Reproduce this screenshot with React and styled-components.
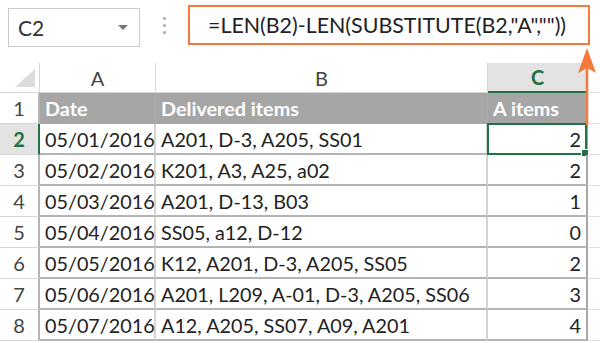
import React from "react";
import styled, { createGlobalStyle } from "styled-components";

const GlobalStyle = createGlobalStyle`
  html, body {
    margin: 0;
    padding: 0;
    background: #ffffff;
  }
  body {
    font-family: Lato, "Open Sans", "Liberation Sans", sans-serif;
    color: #222222;
  }
`;

const green = "#217346";
const orange = "#f37a3a";

const Page = styled.div`
  position: relative;
  width: 600px;
  height: 343px;
  overflow: hidden;
  background: #ffffff;
`;

const FormulaBar = styled.div`
  display: flex;
  align-items: flex-start;
  height: 63px;
  padding: 5px 10px 0 8px;
  box-sizing: border-box;
`;

const NameBox = styled.div`
  width: 132px;
  height: 39px;
  margin-top: 3px;
  box-sizing: border-box;
  border: 1px solid #c9c9c9;
  display: flex;
  align-items: center;
  justify-content: space-between;
  padding: 0 11px 0 9px;
  font-size: 21px;
  color: #333333;
`;

const Caret = styled.span`
  width: 0;
  height: 0;
  border-left: 5px solid transparent;
  border-right: 5px solid transparent;
  border-top: 5px solid #777777;
`;

const Dots = styled.div`
  width: 48px;
  height: 40px;
  display: flex;
  flex-direction: column;
  align-items: center;
  justify-content: center;
  gap: 4px;
`;

const Dot = styled.span`
  width: 3px;
  height: 3px;
  border-radius: 50%;
  background: #a8a8a8;
`;

const FormulaInput = styled.div`
  flex: 1;
  height: 40px;
  box-sizing: border-box;
  border: 2px solid ${orange};
  display: flex;
  align-items: center;
  padding-left: 18px;
  font-size: 21.4px;
  color: #222222;
  white-space: nowrap;
`;

const Sheet = styled.div`
  display: grid;
  grid-template-columns: 40px 116px 332px 100px 12px;
  grid-template-rows: 30px repeat(8, 31px);
`;

const Corner = styled.div`
  border-right: 1px solid #d6d6d6;
  border-bottom: 1px solid #d6d6d6;
  display: flex;
  align-items: flex-end;
  justify-content: flex-end;
  padding: 0 4px 5px 0;
`;

const ColHead = styled.div`
  display: flex;
  align-items: center;
  justify-content: center;
  font-size: 20px;
  color: ${(p) => (p.$active ? green : "#444444")};
  font-weight: ${(p) => (p.$active ? 700 : 400)};
  background: ${(p) => (p.$active ? "#e3e3e3" : "#ffffff")};
  border-right: 1px solid #d6d6d6;
  border-bottom: ${(p) => (p.$active ? `2px solid ${green}` : "1px solid #d6d6d6")};
  box-sizing: border-box;
`;

const RowHead = styled.div`
  display: flex;
  align-items: center;
  justify-content: center;
  font-size: 20px;
  color: ${(p) => (p.$active ? green : "#444444")};
  font-weight: ${(p) => (p.$active ? 700 : 400)};
  background: ${(p) => (p.$active ? "#e3e3e3" : "#ffffff")};
  border-right: ${(p) => (p.$active ? `2px solid ${green}` : "2px solid #b4b4b4")};
  border-bottom: 1px solid #d6d6d6;
  box-sizing: border-box;
`;

const Cell = styled.div`
  position: relative;
  display: flex;
  align-items: center;
  justify-content: ${(p) => (p.$num ? "flex-end" : "flex-start")};
  padding: ${(p) => (p.$num ? "0 5px 0 0" : "0 0 0 5px")};
  font-size: 19.8px;
  white-space: nowrap;
  box-sizing: border-box;
  color: #222222;
  border-right: 2px solid #d4d4d4;
  border-bottom: 2px solid #b4b4b4;
`;

const TitleCell = styled(Cell)`
  background: #a6a6a6;
  color: #ffffff;
  font-weight: 700;
  border-right: 1px solid #acacac;
  border-bottom: 1px solid #a6a6a6;
`;

const LastCell = styled(Cell)`
  border-right: 2px solid #a8a8a8;
`;

const Spare = styled.div`
  border-bottom: 1px solid #e0e0e0;
`;

const Selected = styled.div`
  position: absolute;
  inset: -1px -1px -2px -1px;
  border: 2px solid ${green};
  pointer-events: none;
`;

const Handle = styled.div`
  position: absolute;
  right: -4px;
  bottom: -4px;
  width: 6px;
  height: 6px;
  background: ${green};
  border: 1px solid #ffffff;
`;

const Arrow = styled.svg`
  position: absolute;
  left: 577px;
  top: 47px;
`;

const rows = [
  ["05/01/2016", "A201, D-3, A205, SS01", 2],
  ["05/02/2016", "K201, A3, A25, a02", 2],
  ["05/03/2016", "A201, D-13, B03", 1],
  ["05/04/2016", "SS05, a12, D-12", 0],
  ["05/05/2016", "K12, A201, D-3, A205, SS05", 2],
  ["05/06/2016", "A201, L209, A-01, D-3, A205, SS06", 3],
  ["05/07/2016", "A12, A205, SS07, A09, A201", 4],
];

const App = () => {
  return (
    <Page>
      <GlobalStyle />
      <FormulaBar>
        <NameBox>
          <span>C2</span>
          <Caret />
        </NameBox>
        <Dots>
          <Dot />
          <Dot />
          <Dot />
        </Dots>
        <FormulaInput>=LEN(B2)-LEN(SUBSTITUTE(B2,"A",""))</FormulaInput>
      </FormulaBar>

      <Sheet>
        <Corner>
          <svg width="20" height="18" viewBox="0 0 20 18">
            <polygon points="20,0 20,18 0,18" fill="#dcdcdc" />
          </svg>
        </Corner>
        <ColHead>A</ColHead>
        <ColHead>B</ColHead>
        <ColHead $active>C</ColHead>
        <Spare />

        <RowHead>1</RowHead>
        <TitleCell>Date</TitleCell>
        <TitleCell>Delivered items</TitleCell>
        <TitleCell>A items</TitleCell>
        <Spare />

        {rows.map((r, i) => (
          <React.Fragment key={i}>
            <RowHead $active={i === 0}>{i + 2}</RowHead>
            <Cell>{r[0]}</Cell>
            <Cell>{r[1]}</Cell>
            <LastCell $num>
              {r[2]}
              {i === 0 && (
                <Selected>
                  <Handle />
                </Selected>
              )}
            </LastCell>
            <Spare />
          </React.Fragment>
        ))}
      </Sheet>

      <Arrow width="20" height="80" viewBox="0 0 20 80">
        <line x1="10" y1="20" x2="10" y2="78" stroke={orange} strokeWidth="2.5" />
        <polygon points="10,1 19,26 10,21 1,26" fill={orange} />
      </Arrow>
    </Page>
  );
};

export default App;
